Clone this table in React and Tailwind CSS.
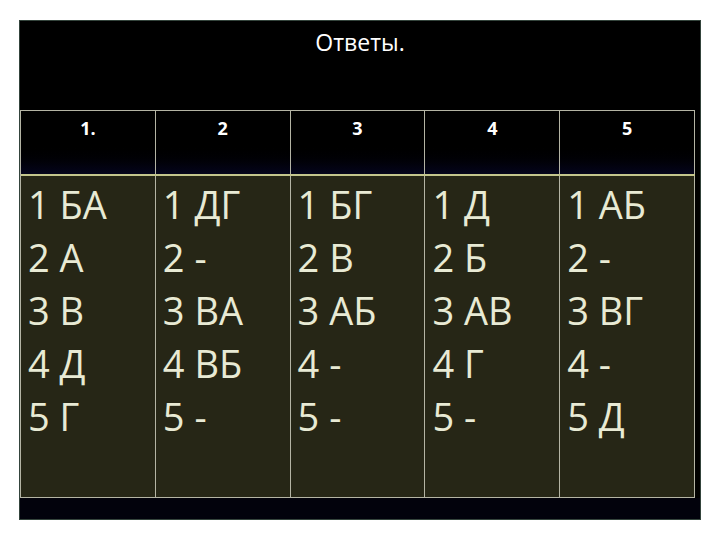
export default function App() {
  const heads = ["1.", "2", "3", "4", "5"];
  const cols = [
    ["1 БА", "2 А", "3 В", "4 Д", "5 Г"],
    ["1 ДГ", "2 -", "3 ВА", "4 ВБ", "5 -"],
    ["1 БГ", "2 В", "3 АБ", "4 -", "5 -"],
    ["1 Д", "2 Б", "3 АВ", "4 Г", "5 -"],
    ["1 АБ", "2 -", "3 ВГ", "4 -", "5 Д"],
  ];
  return (
    <div className="w-[720px] h-[540px] bg-white pt-[20px] pl-[19px] font-['Open_Sans',sans-serif]">
      <div className="w-[682px] h-[500px] bg-black border border-[#34443c] flex flex-col">
        <div className="h-[89px] pt-[5px] text-center text-white text-[23px] leading-[32px]">
          Ответы.
        </div>
        <div className="w-[675px] border-l border-[#b4b4a4]">
          <div className="grid grid-cols-5 border-t border-[#b4b4a4] h-[64px] bg-gradient-to-b from-black via-black to-[#05051c]">
            {heads.map((h, i) => (
              <div
                key={i}
                className="border-r border-[#b4b4a4] text-center text-white font-bold text-[18px] leading-[24px] pt-[5px]"
              >
                {h}
              </div>
            ))}
          </div>
          <div className="grid grid-cols-5 border-t-2 border-t-[#c4c68c] border-b border-b-[#b4b4a4] h-[324px] bg-[#262616]">
            {cols.map((c, i) => (
              <div
                key={i}
                className="border-r border-[#b4b4a4] pl-[7px] pt-[2px] text-[#e8ead4] text-[38px] leading-[53px]"
              >
                {c.map((t, j) => (
                  <div key={j} className="whitespace-pre">{t}</div>
                ))}
              </div>
            ))}
          </div>
        </div>
        <div className="flex-1 bg-[#02020c]"></div>
      </div>
    </div>
  );
}
